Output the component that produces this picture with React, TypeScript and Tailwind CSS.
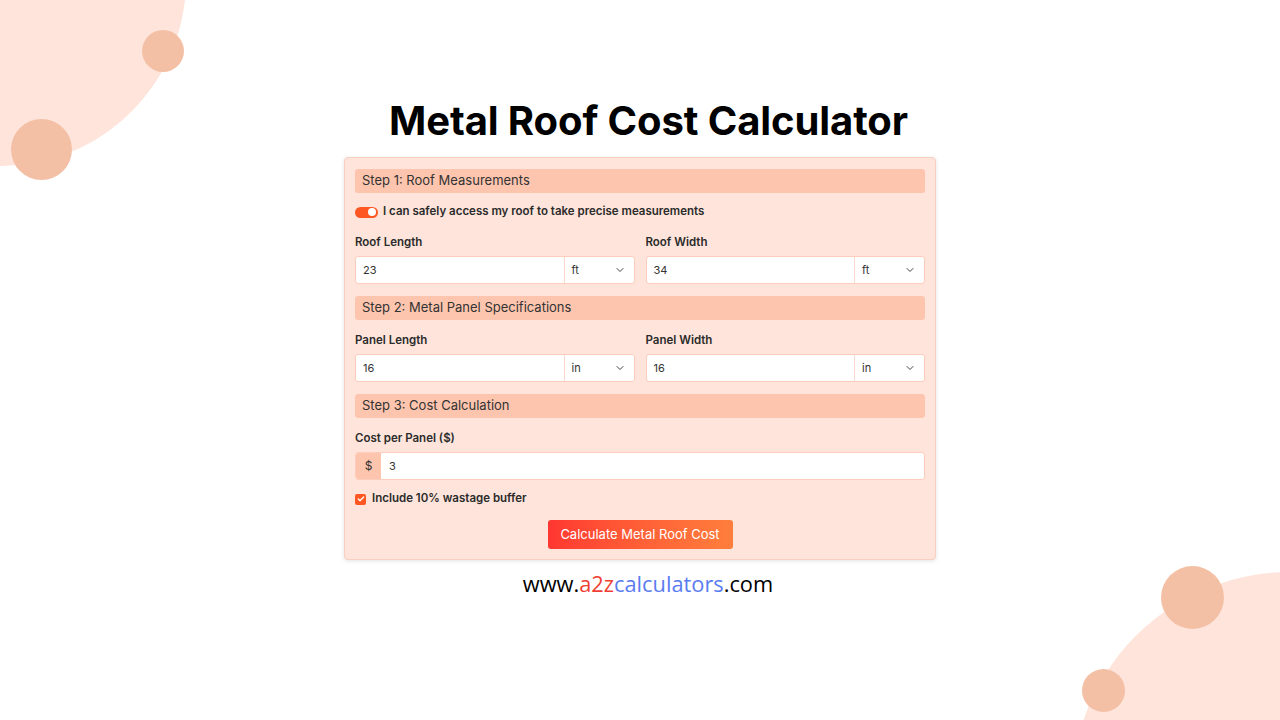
import { ChevronDown, Check } from 'lucide-react';

function StepHeader({ title }: { title: string }) {
  return (
    <div className="h-[24px] rounded-[3px] bg-[#fec5ae] px-[7px] flex items-center text-[13px] text-[#333333]">
      {title}
    </div>
  );
}

function UnitField({ label, value, unit }: { label: string; value: string; unit: string }) {
  return (
    <div className="flex flex-col">
      <div className="h-[14px] leading-[14px] text-[11.5px] font-semibold text-[#2b2b2b]">{label}</div>
      <div className="mt-[7px] h-[28px] flex bg-white border border-[#fccdbb] rounded-[3px]">
        <div className="flex-1 flex items-center px-[7px] text-[11px] text-[#333333]">{value}</div>
        <div className="w-[70px] border-l border-[#fcd9cc] flex items-center justify-between pl-[7px] pr-[8px] text-[11px] text-[#333333]">
          <span>{unit}</span>
          <ChevronDown className="w-[12px] h-[12px] text-[#444]" strokeWidth={2} />
        </div>
      </div>
    </div>
  );
}

export default function App() {
  return (
    <div className="relative w-full h-[720px] overflow-hidden bg-white" style={{ fontFamily: 'Inter, "Liberation Sans", sans-serif' }}>
      {/* decorative circles */}
      <div className="absolute left-[-186px] top-[-206px] w-[372px] h-[372px] rounded-full bg-[#fee4da]" />
      <div className="absolute left-[142px] top-[30px] w-[42px] h-[42px] rounded-full bg-[#f4c0a5]" />
      <div className="absolute left-[11px] top-[119px] w-[61px] h-[61px] rounded-full bg-[#f4c0a5]" />
      <div className="absolute left-[1072px] top-[572px] w-[436px] h-[436px] rounded-full bg-[#fee4da]" />
      <div className="absolute left-[1161px] top-[566px] w-[63px] h-[63px] rounded-full bg-[#f4c0a5]" />
      <div className="absolute left-[1082px] top-[669px] w-[43px] h-[43px] rounded-full bg-[#f4c0a5]" />

      <div className="relative flex flex-col items-center pt-[97px]">
        <h1 className="ml-[17px] h-[48px] leading-[48px] text-[40px] font-bold text-black tracking-[-0.1px]">
          Metal Roof Cost Calculator
        </h1>

        <div className="mt-[12px] w-[592px] bg-[#fee4da] border border-[#f9d0c0] rounded-[4px] shadow-[0_1px_4px_rgba(0,0,0,0.12)] px-[10px] pt-[11px] pb-[10px] flex flex-col">
          <StepHeader title="Step 1: Roof Measurements" />

          <div className="mt-[12px] h-[14px] flex items-center gap-[5px]">
            <div className="w-[23px] h-[11px] rounded-full bg-[#ff5722] flex items-center justify-end pr-[2px]">
              <div className="w-[8px] h-[8px] rounded-full bg-white" />
            </div>
            <span className="text-[11.5px] font-semibold text-[#2b2b2b]">
              I can safely access my roof to take precise measurements
            </span>
          </div>

          <div className="mt-[16px] grid grid-cols-2 gap-[11px]">
            <UnitField label="Roof Length" value="23" unit="ft" />
            <UnitField label="Roof Width" value="34" unit="ft" />
          </div>

          <div className="mt-[12px]">
            <StepHeader title="Step 2: Metal Panel Specifications" />
          </div>

          <div className="mt-[13px] grid grid-cols-2 gap-[11px]">
            <UnitField label="Panel Length" value="16" unit="in" />
            <UnitField label="Panel Width" value="16" unit="in" />
          </div>

          <div className="mt-[12px]">
            <StepHeader title="Step 3: Cost Calculation" />
          </div>

          <div className="mt-[13px] h-[14px] leading-[14px] text-[11.5px] font-semibold text-[#2b2b2b]">Cost per Panel ($)</div>
          <div className="mt-[7px] h-[28px] flex bg-white border border-[#fccdbb] rounded-[3px] overflow-hidden">
            <div className="w-[25px] bg-[#fec5ae] flex items-center justify-center text-[12px] text-[#333333]">$</div>
            <div className="flex-1 flex items-center px-[8px] text-[11px] text-[#333333]">3</div>
          </div>

          <div className="mt-[12px] h-[14px] flex items-center gap-[6px]">
            <div className="w-[11px] h-[11px] rounded-[2px] bg-[#ff5722] flex items-center justify-center">
              <Check className="w-[8px] h-[8px] text-white" strokeWidth={4} />
            </div>
            <span className="text-[11.5px] font-semibold text-[#2b2b2b]">Include 10% wastage buffer</span>
          </div>

          <div className="mt-[14px] flex justify-center">
            <button className="w-[185px] h-[29px] rounded-[3px] bg-gradient-to-r from-[#ff3631] to-[#ff7e3c] text-white text-[13px]">
              Calculate Metal Roof Cost
            </button>
          </div>
        </div>

        <div
          className="ml-[16px] mt-[10px] h-[28px] leading-[28px] text-[21.8px] text-black"
          style={{ fontFamily: '"Open Sans", "Liberation Sans", sans-serif' }}
        >
          www.<span className="text-[#ef3f34]">a2z</span>
          <span className="text-[#5a7cf0]">calculators</span>.com
        </div>
      </div>
    </div>
  );
}
